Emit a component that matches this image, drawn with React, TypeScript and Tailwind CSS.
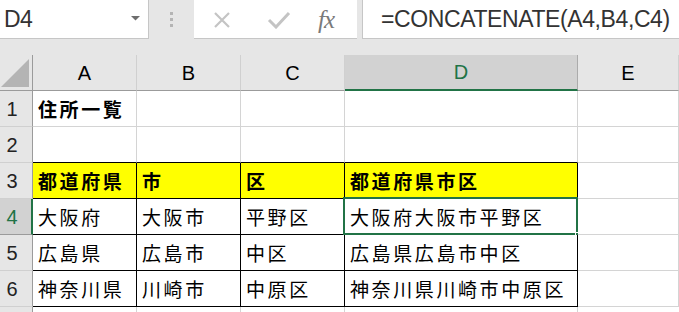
import React from "react";

const jp = { fontFamily: '"Noto Sans CJK JP", "Noto Sans", sans-serif' };
const latin = { fontFamily: '"Liberation Sans", Arial, sans-serif' };

type Cell = { text?: string; bold?: boolean; fill?: boolean; boxed?: boolean };

const rows: { n: number; cells: Cell[] }[] = [
  { n: 1, cells: [{ text: "住所一覧", bold: true }, {}, {}, {}, {}] },
  { n: 2, cells: [{}, {}, {}, {}, {}] },
  {
    n: 3,
    cells: [
      { text: "都道府県", bold: true, fill: true, boxed: true },
      { text: "市", bold: true, fill: true, boxed: true },
      { text: "区", bold: true, fill: true, boxed: true },
      { text: "都道府県市区", bold: true, fill: true, boxed: true },
      {},
    ],
  },
  {
    n: 4,
    cells: [
      { text: "大阪府", boxed: true },
      { text: "大阪市", boxed: true },
      { text: "平野区", boxed: true },
      { text: "大阪府大阪市平野区", boxed: true },
      {},
    ],
  },
  {
    n: 5,
    cells: [
      { text: "広島県", boxed: true },
      { text: "広島市", boxed: true },
      { text: "中区", boxed: true },
      { text: "広島県広島市中区", boxed: true },
      {},
    ],
  },
  {
    n: 6,
    cells: [
      { text: "神奈川県", boxed: true },
      { text: "川崎市", boxed: true },
      { text: "中原区", boxed: true },
      { text: "神奈川県川崎市中原区", boxed: true },
      {},
    ],
  },
];

const grid = "grid grid-cols-[33px_104px_104px_104px_233px_1fr]";

function Toolbar() {
  return (
    <div className="flex h-[40px] bg-[#e6e6e6]">
      {/* Name box */}
      <div className="relative flex h-[39px] w-[149px] items-center border-r border-b border-[#c6c6c6] bg-white pl-[4px]">
        <span className="text-[23px] leading-none tracking-[-0.5px] text-[#333]" style={latin}>
          D4
        </span>
        <svg className="absolute left-[131px] top-[16px]" width="9" height="5" viewBox="0 0 9 5">
          <polygon points="0,0 9,0 4.5,4.5" fill="#6e6e6e" />
        </svg>
      </div>
      {/* dots */}
      <div className="flex w-[45px] flex-col items-center justify-center gap-[3px] pb-[2px]">
        <span className="h-[3px] w-[3px] bg-[#b4b4b4]" />
        <span className="h-[3px] w-[3px] bg-[#b4b4b4]" />
        <span className="h-[3px] w-[3px] bg-[#b4b4b4]" />
      </div>
      {/* buttons */}
      <div className="relative h-[39px] w-[163px] border-b border-[#c6c6c6] bg-white">
        <svg className="absolute left-[19px] top-[12px]" width="18" height="16" viewBox="0 0 18 16">
          <path d="M2 1 L16 15 M16 1 L2 15" stroke="#c4c4c4" strokeWidth="2.2" />
        </svg>
        <svg className="absolute left-[73px] top-[11px]" width="24" height="18" viewBox="0 0 24 18">
          <path d="M2 9 L9 16 L22 2" stroke="#c4c4c4" strokeWidth="3" fill="none" />
        </svg>
        <span
          className="absolute left-[124px] top-[7px] text-[25px] italic leading-none tracking-[-1px] text-[#7a7a7a]"
          style={{ fontFamily: '"Liberation Serif", "Times New Roman", serif' }}
        >
          fx
        </span>
      </div>
      <div className="w-[5px]" />
      {/* formula box */}
      <div className="flex h-[39px] flex-1 items-center border-l border-b border-[#c6c6c6] bg-white pl-[18px]">
        <span className="text-[23px] leading-none tracking-[-0.4px] text-[#333]" style={latin}>
          =CONCATENATE(A4,B4,C4)
        </span>
      </div>
    </div>
  );
}

function ColumnHeaders() {
  const cols = ["A", "B", "C", "D", "E"];
  return (
    <div className={`${grid} h-[36px] bg-[#e6e6e6]`}>
      <div className="relative border-r border-b border-[#9b9b9b]">
        <svg className="absolute left-[1px] top-[4px]" width="29" height="29" viewBox="0 0 29 29">
          <polygon points="0,28 28,28 28,0" fill="#b4b4b4" />
        </svg>
      </div>
      {cols.map((c) => {
        const active = c === "D";
        return (
          <div
            key={c}
            className={
              active
                ? "flex items-center justify-center border-r border-[#ababab] border-b-2 border-b-[#217346] bg-[#d2d2d2] text-[#217346]"
                : "flex items-center justify-center border-r border-b border-r-[#d0d0d0] border-b-[#9b9b9b] text-black"
            }
          >
            <span className="text-[20px] leading-none" style={latin}>
              {c}
            </span>
          </div>
        );
      })}
    </div>
  );
}

function Row({ n, cells }: { n: number; cells: Cell[] }) {
  const active = n === 4;
  return (
    <div className={`${grid} h-[36px]`}>
      <div
        className={
          active
            ? "flex items-center justify-center border-b border-b-[#9b9b9b] border-r-2 border-r-[#217346] bg-[#d2d2d2] pr-[7px] text-[#217346]"
            : "flex items-center justify-center border-r border-b border-r-[#9b9b9b] border-b-[#d0d0d0] bg-[#e6e6e6] pr-[8px] text-[#222]"
        }
      >
        <span className="text-[20px] leading-none" style={latin}>
          {n}
        </span>
      </div>
      {cells.map((cell, i) => {
        const belowBoxed = n === 2 && i < 4;
        const border = cell.boxed
          ? "border-r border-b border-black"
          : belowBoxed
          ? "border-r border-b border-r-[#d4d4d4] border-b-black"
          : "border-r border-b border-[#d4d4d4]";
        const selected = n === 4 && i === 3;
        return (
          <div
            key={i}
            className={`relative flex items-center whitespace-nowrap pl-[5px] ${border} ${
              cell.fill ? "bg-[#ffff00]" : "bg-white"
            }`}
          >
            {cell.text && (
              <span
                className={`text-[19px] leading-none tracking-[2.6px] text-black ${cell.bold ? "font-bold" : "font-normal"}`}
                style={jp}
              >
                {cell.text}
              </span>
            )}
            {selected && (
              <>
                <div className="pointer-events-none absolute -left-[2px] -top-[2px] h-[38px] w-[235px] border-2 border-[#217346]" />
                <div className="absolute -bottom-[4px] -right-[4px] h-[6px] w-[6px] border border-white bg-[#217346]" />
              </>
            )}
          </div>
        );
      })}
    </div>
  );
}

export default function App() {
  return (
    <div className="h-[312px] w-[679px] overflow-hidden bg-[#e6e6e6]">
      <Toolbar />
      <div className="h-[15px]" />
      <ColumnHeaders />
      {rows.map((r) => (
        <Row key={r.n} n={r.n} cells={r.cells} />
      ))}
      <div className={`${grid} h-[36px]`}>
        <div className="border-r border-[#9b9b9b] bg-[#e6e6e6]" />
        <div className="border-r border-[#d4d4d4] bg-white" />
        <div className="border-r border-[#d4d4d4] bg-white" />
        <div className="border-r border-[#d4d4d4] bg-white" />
        <div className="border-r border-[#d4d4d4] bg-white" />
        <div className="bg-white" />
      </div>
    </div>
  );
}
